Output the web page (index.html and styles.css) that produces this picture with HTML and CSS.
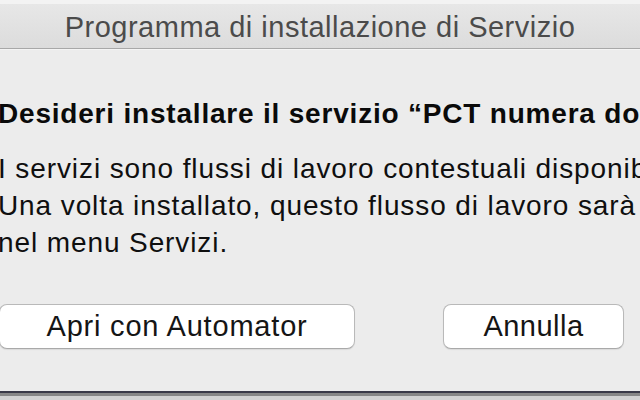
FILE: index.html
```html
<!DOCTYPE html>
<html lang="it">
<head>
<meta charset="utf-8">
<title>Programma di installazione di Servizio</title>
<link rel="stylesheet" href="styles.css">
</head>
<body>
<div class="dialog">
  <div class="titlebar">
    <div class="title">Programma di installazione di Servizio</div>
  </div>
  <div class="content">
    <div class="message">Desideri installare il servizio “PCT numera documenti”?</div>
    <div class="info">
      <div class="line">I servizi sono flussi di lavoro contestuali disponibili in tutto Mac OS X.</div>
      <div class="line">Una volta installato, questo flusso di lavoro sarà disponibile</div>
      <div class="line">nel menu Servizi.</div>
    </div>
    <div class="buttons">
      <div class="btn btn-open">Apri con Automator</div>
      <div class="btn btn-cancel">Annulla</div>
    </div>
  </div>
</div>
<div class="edge-dark"></div>
<div class="edge-mid"></div>
<div class="edge-light"></div>
</body>
</html>
```

FILE: styles.css
```css
html, body {
  margin: 0;
  padding: 0;
}
body {
  width: 640px;
  height: 400px;
  overflow: hidden;
  background: #ececec;
  font-family: "Liberation Sans", Arial, sans-serif;
  color: #111;
}
.dialog {
  height: 391px;
  display: flex;
  flex-direction: column;
  background: #ececec;
  overflow: hidden;
}
.titlebar {
  flex: none;
  box-sizing: border-box;
  height: 49px;
  padding-top: 1px;
  border-top: 4px solid #f3f3f3;
  border-bottom: 1px solid #a8a8a8;
  background: linear-gradient(#e7e7e7, #dcdcdc);
  box-shadow: 0 1px 0 #f4f4f4;
}
.title {
  text-align: center;
  font-size: 29px;
  line-height: 44px;
  letter-spacing: 0.5px;
  color: #4b4b4b;
  white-space: nowrap;
}
.content {
  flex: 1;
  padding-top: 49px;
  white-space: nowrap;
}
.message {
  margin-left: -2px;
  font-weight: bold;
  font-size: 28px;
  line-height: 32px;
  letter-spacing: 0.8px;
  color: #0a0a0a;
}
.info {
  margin-top: 20px;
  margin-left: -2px;
  font-size: 28px;
  line-height: 37px;
  letter-spacing: 0.9px;
  color: #0f0f0f;
}
.buttons {
  display: flex;
  margin-top: 43px;
  margin-left: -1px;
  gap: 88px;
}
.btn {
  box-sizing: border-box;
  height: 45px;
  display: flex;
  align-items: center;
  justify-content: center;
  background: #ffffff;
  border: 1px solid #b9b9b9;
  border-bottom-color: #a9a9a9;
  border-radius: 8px;
  box-shadow: 0 1px 1px rgba(0,0,0,0.08);
  font-size: 29px;
  letter-spacing: 0.8px;
  color: #151515;
}
.btn-open {
  width: 356px;
}
.btn-cancel {
  width: 181px;
  letter-spacing: 0.5px;
}
.edge-dark {
  height: 2px;
  background: #3a3a48;
}
.edge-mid {
  height: 3px;
  background: #878787;
}
.edge-light {
  height: 4px;
  background: #d2d2d2;
}
```
